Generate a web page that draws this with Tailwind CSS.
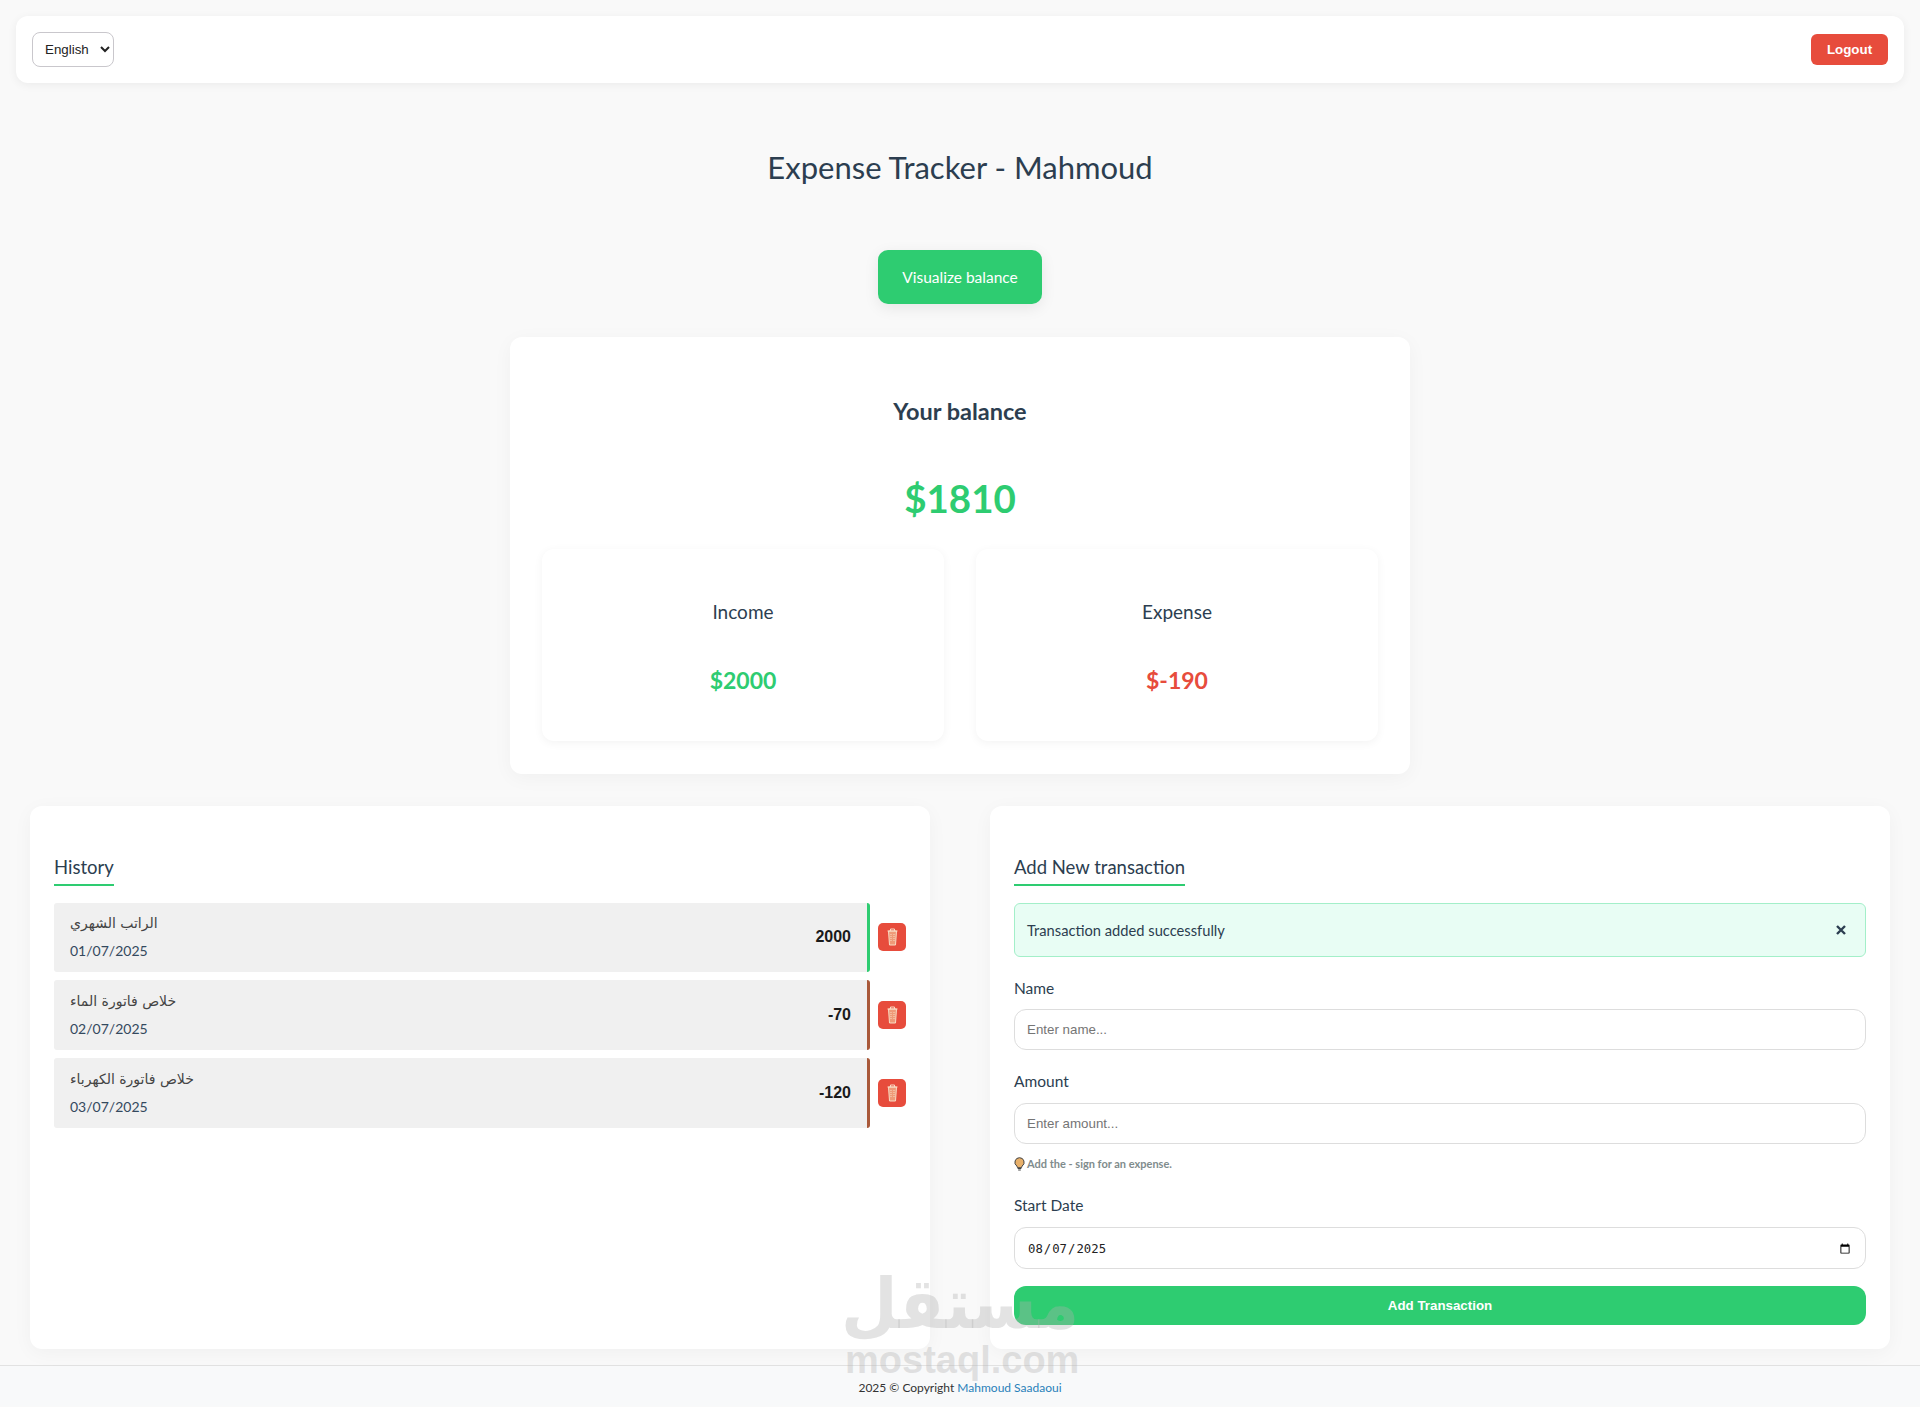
<!DOCTYPE html>
<html lang="en">
<head>
    <meta charset="UTF-8">
    <meta name="viewport" content="width=device-width, initial-scale=1.0">
    <title>Expense Tracker</title>
    <script src="https://cdn.jsdelivr.net/npm/@tailwindcss/browser@4"></script>
</head>

<body class="relative bg-[#f9f9f9] min-h-[1407px] font-['Lato','Noto_Sans',sans-serif] text-[#2c3e50]">
    <!-- Navbar -->
    <nav class="mx-4 pt-4">
        <div class="h-[67px] bg-white rounded-xl shadow-[0_2px_10px_rgba(0,0,0,0.06)] px-4 flex items-center justify-between">
            <select class="w-[82px] h-[35px] pl-[8px] bg-white border border-[#c9c7cc] rounded-lg text-[13.33px] text-[#222] font-['Liberation_Sans',sans-serif]">
                <option>English</option>
            </select>
            <button class="w-[77px] h-[31px] bg-[#e74c3c] text-white text-[13.33px] font-bold rounded-md font-['Liberation_Sans',sans-serif]">Logout</button>
        </div>
    </nav>

    <h1 class="mt-[60px] text-center text-[31px] leading-[48px] font-normal">Expense Tracker - Mahmoud</h1>

    <div class="mt-[59px] flex justify-center">
        <button class="w-[164px] h-[54px] pt-[1px] bg-[#2ecc71] text-white text-[15.5px] rounded-[10px] shadow-[0_4px_15px_rgba(0,0,0,0.08)]">Visualize balance</button>
    </div>

    <!-- Balance -->
    <section class="mt-[33px] mx-auto w-[900px] h-[437px] bg-white rounded-xl shadow-[0_4px_20px_rgba(0,0,0,0.04)] px-8 pt-[56px]">
        <h2 class="text-center text-[23.5px] leading-[36px] font-bold">Your balance</h2>
        <p class="mt-[39px] text-center text-[38.5px] leading-[60px] font-bold text-[#2ecc71]">$1810</p>
        <div class="mt-[21px] grid grid-cols-2 gap-8">
            <div class="h-[192px] rounded-xl bg-white shadow-[0_2px_10px_rgba(0,0,0,0.05)] pt-[48px] text-center">
                <h3 class="text-[19px] leading-[30px] font-normal">Income</h3>
                <p class="mt-[35px] text-[23px] leading-[36px] font-bold text-[#2ecc71]">$2000</p>
            </div>
            <div class="h-[192px] rounded-xl bg-white shadow-[0_2px_10px_rgba(0,0,0,0.05)] pt-[48px] text-center">
                <h3 class="text-[19px] leading-[30px] font-normal">Expense</h3>
                <p class="mt-[35px] text-[23px] leading-[36px] font-bold text-[#e74c3c]">$-190</p>
            </div>
        </div>
    </section>

    <div class="mt-8 px-[30px] grid grid-cols-2 gap-[60px]">
        <!-- History -->
        <section class="h-[543px] bg-white rounded-xl shadow-[0_4px_20px_rgba(0,0,0,0.04)] px-6 pt-[46px]">
            <h3 class="inline-block text-[18.5px] leading-[30px] pb-[2px] border-b-2 border-[#2ecc71]">History</h3>
            <ul class="mt-[17px] flex flex-col gap-2">
                <li class="flex items-center gap-2">
                    <div class="h-[69px] pb-[1px] flex-1 bg-[#f0f0f0] rounded-[3px] border-r-[3px] border-[#2ecc71] pl-4 pr-4 flex items-center justify-between">
                        <div>
                            <p dir="rtl" class="text-left text-[14px] leading-[21px] text-[#444] font-['DejaVu_Sans',sans-serif]">الراتب الشهري</p>
                            <p class="mt-[6px] text-[14px] leading-[21px] text-[#34495e]">01/07/2025</p>
                        </div>
                        <span class="font-bold text-[16px] text-[#1a1a1a] font-['Liberation_Sans',sans-serif]">2000</span>
                    </div>
                    <button class="w-7 h-7 mb-[1px] bg-[#e74c3c] rounded-[5px] flex items-center justify-center">
                        <svg width="11" height="18" viewBox="0 0 11 18" fill="#ef9a78" stroke="#f8dcc4" stroke-width="1"><path d="M0.5 3h10M1.5 3l1 14h6l1-14z"/><path d="M3.5 3V1h4v2" fill="none"/><path d="M4 6v8M7 6v8" stroke-dasharray="1 1"/></svg>
                    </button>
                </li>
                <li class="flex items-center gap-2">
                    <div class="h-[70px] flex-1 bg-[#f0f0f0] rounded-[3px] border-r-[3px] border-[#a9593a] pl-4 pr-4 flex items-center justify-between">
                        <div>
                            <p dir="rtl" class="text-left text-[14px] leading-[21px] text-[#444] font-['DejaVu_Sans',sans-serif]">خلاص فاتورة الماء</p>
                            <p class="mt-[6px] text-[14px] leading-[21px] text-[#34495e]">02/07/2025</p>
                        </div>
                        <span class="font-bold text-[16px] text-[#1a1a1a] font-['Liberation_Sans',sans-serif]">-70</span>
                    </div>
                    <button class="w-7 h-7 bg-[#e74c3c] rounded-[5px] flex items-center justify-center">
                        <svg width="11" height="18" viewBox="0 0 11 18" fill="#ef9a78" stroke="#f8dcc4" stroke-width="1"><path d="M0.5 3h10M1.5 3l1 14h6l1-14z"/><path d="M3.5 3V1h4v2" fill="none"/><path d="M4 6v8M7 6v8" stroke-dasharray="1 1"/></svg>
                    </button>
                </li>
                <li class="flex items-center gap-2">
                    <div class="h-[70px] flex-1 bg-[#f0f0f0] rounded-[3px] border-r-[3px] border-[#a9593a] pl-4 pr-4 flex items-center justify-between">
                        <div>
                            <p dir="rtl" class="text-left text-[14px] leading-[21px] text-[#444] font-['DejaVu_Sans',sans-serif]">خلاص فاتورة الكهرباء</p>
                            <p class="mt-[6px] text-[14px] leading-[21px] text-[#34495e]">03/07/2025</p>
                        </div>
                        <span class="font-bold text-[16px] text-[#1a1a1a] font-['Liberation_Sans',sans-serif]">-120</span>
                    </div>
                    <button class="w-7 h-7 bg-[#e74c3c] rounded-[5px] flex items-center justify-center">
                        <svg width="11" height="18" viewBox="0 0 11 18" fill="#ef9a78" stroke="#f8dcc4" stroke-width="1"><path d="M0.5 3h10M1.5 3l1 14h6l1-14z"/><path d="M3.5 3V1h4v2" fill="none"/><path d="M4 6v8M7 6v8" stroke-dasharray="1 1"/></svg>
                    </button>
                </li>
            </ul>
        </section>

        <!-- Add transaction -->
        <section class="h-[543px] bg-white rounded-xl shadow-[0_4px_20px_rgba(0,0,0,0.04)] px-6 pt-[46px]">
            <h3 class="inline-block text-[18.5px] leading-[30px] pb-[2px] border-b-2 border-[#2ecc71]">Add New transaction</h3>
            <div class="mt-[17px] h-[54px] bg-[#e8fdf4] border border-[#a3efc9] rounded-md pl-3 pr-[19px] flex items-center justify-between text-[14.7px]">
                <span>Transaction added successfully</span>
                <svg width="10" height="10" viewBox="0 0 10 10" stroke="#2c3e50" stroke-width="2.4"><path d="M1 1l8 8M9 1l-8 8"/></svg>
            </div>
            <label class="block mt-[19px] text-[15.5px] leading-[24px]">Name</label>
            <input type="text" placeholder="Enter name..." class="block mt-[9px] w-full h-[41px] px-3 bg-white border border-[#ddd] rounded-xl text-[13.33px] placeholder:text-[#757575] font-['Liberation_Sans',sans-serif]">
            <label class="block mt-[19px] text-[15.5px] leading-[24px]">Amount</label>
            <input type="text" placeholder="Enter amount..." class="block mt-[10px] w-full h-[41px] px-3 bg-white border border-[#ddd] rounded-xl text-[13.33px] placeholder:text-[#757575] font-['Liberation_Sans',sans-serif]">
            <p class="mt-[11px] flex items-center gap-[2px] text-[11px] leading-[18px] font-bold text-[#7f8c8d]">
                <svg width="11" height="14" viewBox="0 0 11 14"><path d="M5.5 0.7a4.6 4.6 0 0 0-2.6 8.4l.6 1.6h4l.6-1.6a4.6 4.6 0 0 0-2.6-8.4z" fill="#e8b06a" stroke="#444" stroke-width="1"/><path d="M3.7 11.5h3.6M4.2 13h2.6" stroke="#444" stroke-width="1"/></svg>
                Add the - sign for an expense.
            </p>
            <label class="block mt-[20px] text-[15.5px] leading-[24px]">Start Date</label>
            <input type="date" value="2025-08-07" class="block mt-[10px] w-full h-[42px] px-3 pt-[2px] bg-white border border-[#ddd] rounded-xl text-[12.3px] text-[#222] font-['DejaVu_Sans_Mono',monospace]">
            <button class="block mt-[17px] w-full h-[39px] bg-[#2ecc71] text-white text-[13.33px] font-bold rounded-xl font-['Liberation_Sans',sans-serif]">Add Transaction</button>
        </section>
    </div>

    <footer class="mt-4 h-[41px] pt-[3px] bg-[#f8f9fa] border-t border-[#e2e2e2] flex items-center justify-center text-[12px] text-[#333]">
        <span>2025 © Copyright <a href="#" class="text-[#2980b9]">Mahmoud Saadaoui</a></span>
    </footer>

    <!-- Watermark -->
    <div class="absolute left-[845px] top-[1260px] w-[230px] text-center text-[#b0b0b0]/35 pointer-events-none">
        <div dir="rtl" class="-mx-[60px] text-[88px] leading-[88px] font-bold scale-x-[0.74] scale-y-[0.8] font-['DejaVu_Sans',sans-serif]">مستقل</div>
        <div class="-mt-2 text-[38px] leading-[40px] font-bold font-['Liberation_Sans',sans-serif]">mostaql.com</div>
    </div>
</body>
</html>
